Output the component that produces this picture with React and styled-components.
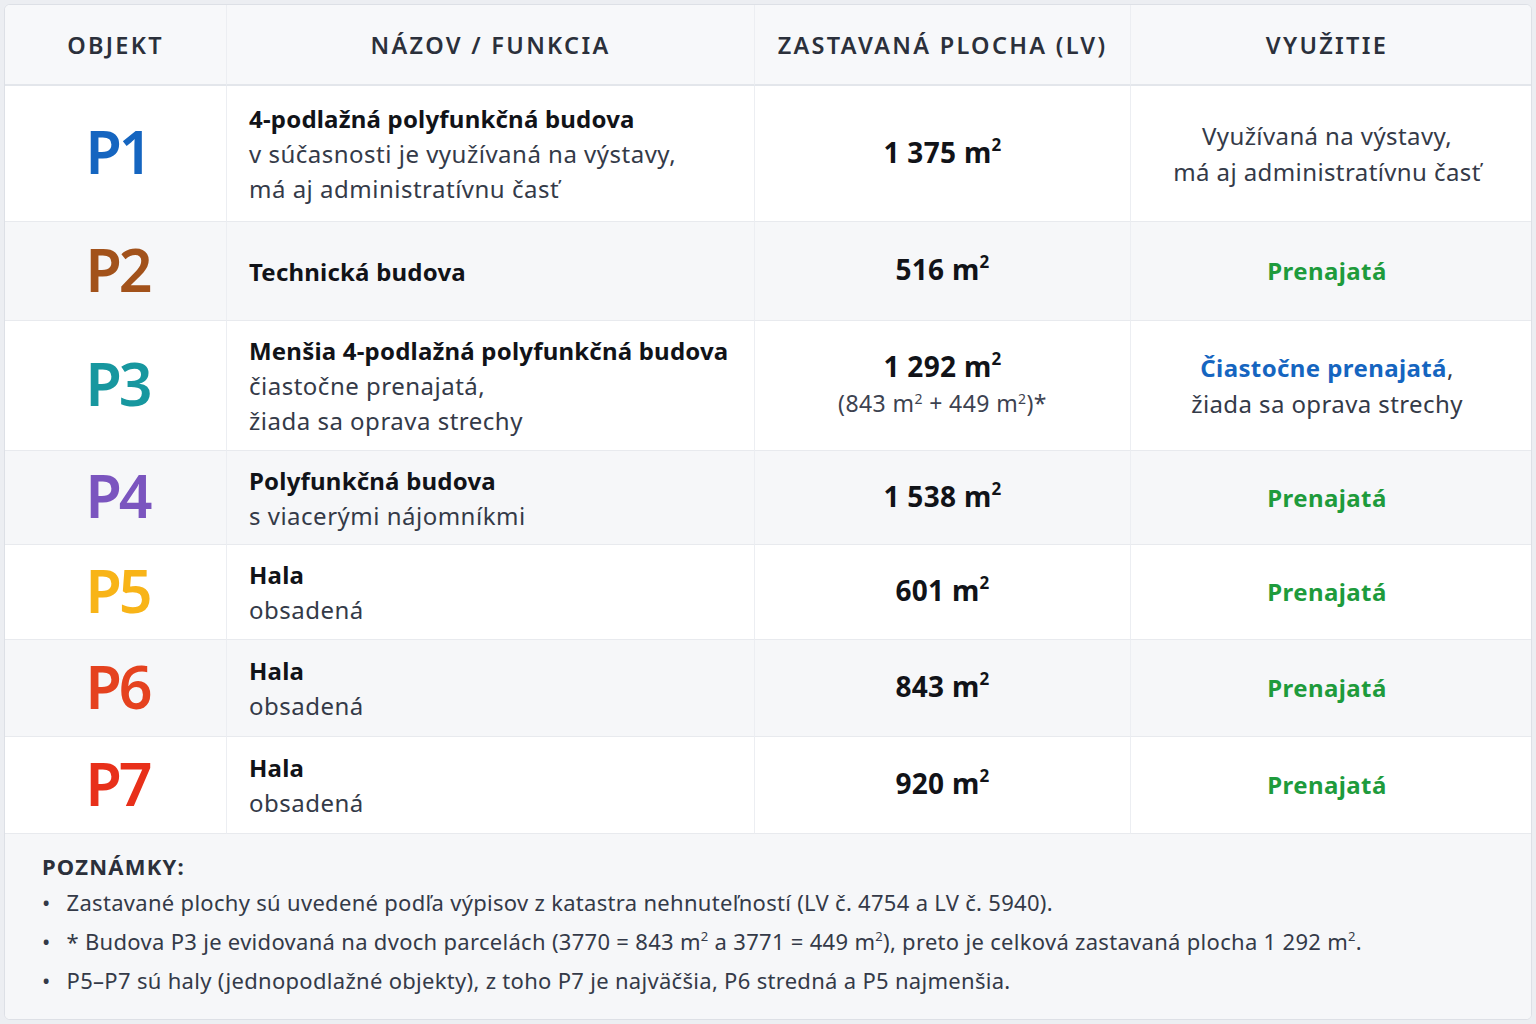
import React from 'react';
import styled, { createGlobalStyle } from 'styled-components';

const Global = createGlobalStyle`
  html, body {
    margin: 0;
    padding: 0;
    background: #eceef2;
  }
  body {
    font-family: "Noto Sans", "Open Sans", sans-serif;
    color: #1b1f27;
  }
`;

const Page = styled.div`
  width: 1536px;
  height: 1024px;
  padding: 4px;
  box-sizing: border-box;
`;

const Card = styled.div`
  background: #fff;
  border: 1px solid #dde0e6;
  border-radius: 6px;
  overflow: hidden;
  height: 100%;
  box-sizing: border-box;
  display: flex;
  flex-direction: column;
`;

const Grid = styled.div`
  display: grid;
  grid-template-columns: 222px 528px 376px 1fr;
`;

const HeadCell = styled.div`
  height: 79px;
  background: #f7f8fa;
  border-bottom: 2px solid #e3e6eb;
  border-right: ${(p) => (p.last ? 'none' : '1px solid #eceef2')};
  padding-right: ${(p) => (p.last ? '8px' : '0')};
  display: flex;
  align-items: center;
  justify-content: center;
  font-size: 23.5px;
  font-weight: 600;
  letter-spacing: 2.3px;
  color: #2b303b;
  text-transform: uppercase;
`;

const Cell = styled.div`
  height: ${(p) => p.h}px;
  box-sizing: border-box;
  background: ${(p) => (p.alt ? '#f6f7f9' : '#ffffff')};
  border-bottom: 1px solid #e8eaee;
  border-right: ${(p) => (p.last ? 'none' : '1px solid #eceef2')};
  display: flex;
  flex-direction: column;
  justify-content: center;
  align-items: ${(p) => (p.left ? 'flex-start' : 'center')};
  padding: ${(p) => (p.left ? '0 22px' : p.last ? '0 8px 0 0' : '0')};
  text-align: ${(p) => (p.left ? 'left' : 'center')};
`;

const Code = styled.div`
  font-size: 59px;
  font-weight: 600;
  color: ${(p) => p.color};
  letter-spacing: -3px;
  line-height: 1;
  margin: -4px 0 0 4px;
`;

const Title = styled.div`
  font-size: 24px;
  font-weight: 700;
  color: #111318;
  line-height: 35px;
  letter-spacing: 0.2px;
`;

const Sub = styled.div`
  font-size: 24px;
  color: #343a48;
  line-height: 35px;
  letter-spacing: 0.5px;
`;

const Area = styled.div`
  font-size: 28px;
  font-weight: 700;
  color: #111318;
  line-height: 38px;
  letter-spacing: 0.3px;
  margin-top: -4px;
  sup {
    font-size: 17px;
    vertical-align: 12px;
    line-height: 0;
  }
`;

const AreaNote = styled.div`
  font-size: 23px;
  color: #3c4250;
  line-height: 36px;
  letter-spacing: 0.4px;
  sup {
    font-size: 14px;
    vertical-align: 8px;
    line-height: 0;
  }
`;

const Use = styled.div`
  font-size: 24px;
  color: ${(p) => p.color || '#343a48'};
  font-weight: ${(p) => (p.strong ? 700 : 400)};
  line-height: 36px;
  letter-spacing: 0.4px;
`;

const Accent = styled.span`
  color: #1565c0;
  font-weight: 700;
`;

const Notes = styled.div`
  flex: 1;
  background: #f6f7f9;
  padding: 17px 0 0 37px;
`;

const NotesTitle = styled.div`
  font-size: 22px;
  font-weight: 700;
  letter-spacing: 1.2px;
  color: #2b303b;
  margin-bottom: 2px;
`;

const NoteList = styled.ul`
  margin: 0;
  padding: 0;
  list-style: none;
`;

const Note = styled.li`
  font-size: 22px;
  color: #343a48;
  line-height: 39px;
  letter-spacing: 0.3px;
  display: flex;
  gap: 16px;
  &::before {
    content: '•';
    color: #343a48;
  }
  sup {
    font-size: 13px;
    vertical-align: 9px;
    line-height: 0;
  }
`;

const M2 = () => (
  <>
    {' m'}
    <sup>2</sup>
  </>
);

const rows = [
  {
    code: 'P1',
    color: '#1565c0',
    h: 136,
    title: '4-podlažná polyfunkčná budova',
    sub: ['v súčasnosti je využívaná na výstavy,', 'má aj administratívnu časť'],
    area: '1 375',
    use: <><Use>Využívaná na výstavy,</Use><Use>má aj administratívnu časť</Use></>,
  },
  { code: 'P2', color: '#a2521b', h: 99, title: 'Technická budova', sub: [], area: '516' },
  {
    code: 'P3',
    color: '#17979f',
    h: 130,
    title: 'Menšia 4-podlažná polyfunkčná budova',
    sub: ['čiastočne prenajatá,', 'žiada sa oprava strechy'],
    area: '1 292',
    note: true,
    use: (
      <>
        <Use>
          <Accent>Čiastočne prenajatá</Accent>,
        </Use>
        <Use>žiada sa oprava strechy</Use>
      </>
    ),
  },
  { code: 'P4', color: '#7b55bf', h: 94, title: 'Polyfunkčná budova', sub: ['s viacerými nájomníkmi'], area: '1 538' },
  { code: 'P5', color: '#f8b418', h: 95, title: 'Hala', sub: ['obsadená'], area: '601' },
  { code: 'P6', color: '#e5421f', h: 97, title: 'Hala', sub: ['obsadená'], area: '843' },
  { code: 'P7', color: '#e8301a', h: 97, title: 'Hala', sub: ['obsadená'], area: '920' },
];

const App = () => (
  <>
    <Global />
    <Page>
      <Card>
        <Grid>
          <HeadCell>Objekt</HeadCell>
          <HeadCell>Názov / Funkcia</HeadCell>
          <HeadCell>Zastavaná plocha (LV)</HeadCell>
          <HeadCell last>Využitie</HeadCell>
          {rows.map((r, i) => {
            const alt = i % 2 === 1;
            return (
              <React.Fragment key={r.code}>
                <Cell h={r.h} alt={alt}>
                  <Code color={r.color}>{r.code}</Code>
                </Cell>
                <Cell h={r.h} alt={alt} left>
                  <Title>{r.title}</Title>
                  {r.sub.map((s) => (
                    <Sub key={s}>{s}</Sub>
                  ))}
                </Cell>
                <Cell h={r.h} alt={alt}>
                  <Area>
                    {r.area}
                    <M2 />
                  </Area>
                  {r.note && (
                    <AreaNote>
                      (843 m<sup>2</sup> + 449 m<sup>2</sup>)*
                    </AreaNote>
                  )}
                </Cell>
                <Cell h={r.h} alt={alt} last>
                  {r.use || (
                    <Use color="#1e9b3c" strong>
                      Prenajatá
                    </Use>
                  )}
                </Cell>
              </React.Fragment>
            );
          })}
        </Grid>
        <Notes>
          <NotesTitle>POZNÁMKY:</NotesTitle>
          <NoteList>
            <Note>
              Zastavané plochy sú uvedené podľa výpisov z katastra nehnuteľností (LV č. 4754 a LV č. 5940).
            </Note>
            <Note>
              <span>
                * Budova P3 je evidovaná na dvoch parcelách (3770 = 843 m<sup>2</sup> a 3771 = 449 m<sup>2</sup>),
                preto je celková zastavaná plocha 1 292 m<sup>2</sup>.
              </span>
            </Note>
            <Note>P5–P7 sú haly (jednopodlažné objekty), z toho P7 je najväčšia, P6 stredná a P5 najmenšia.</Note>
          </NoteList>
        </Notes>
      </Card>
    </Page>
  </>
);

export default App;
